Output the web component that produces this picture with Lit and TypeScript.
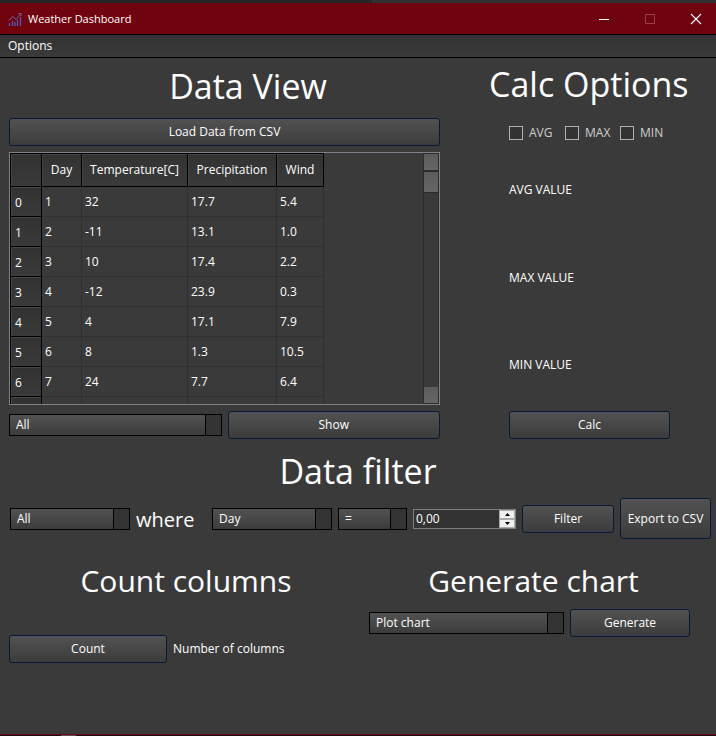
import { LitElement, html, css, svg } from "lit";
import { customElement, state } from "lit/decorators.js";

const HEADERS = ["Day", "Temperature[C]", "Precipitation", "Wind"];
const ROWS = [
  ["1", "32", "17.7", "5.4"],
  ["2", "-11", "13.1", "1.0"],
  ["3", "10", "17.4", "2.2"],
  ["4", "-12", "23.9", "0.3"],
  ["5", "4", "17.1", "7.9"],
  ["6", "8", "1.3", "10.5"],
  ["7", "24", "7.7", "6.4"],
];

@customElement("app-root")
export class AppRoot extends LitElement {
  @state() private amount = 0;

  static styles = css`
    :host {
      display: flex;
      flex-direction: column;
      min-height: 100vh;
      background: #3a3a3a;
      color: #fff;
      font: 12px/16px "Open Sans", "Noto Sans", sans-serif;
    }
    * { box-sizing: border-box; }
    button, select, input { font: inherit; color: inherit; margin: 0; }
    h1, h2, p { margin: 0; font-weight: 400; }
    .backdrop-top { height: 3px; background: linear-gradient(90deg, #262626 52%, #323232 52%); }
    .backdrop-bottom {
      height: 2px;
      border-top: 1px solid #6f050f;
      background: linear-gradient(90deg, #111 61px, #555 61px 76px, #111 76px);
    }
    .titlebar {
      display: flex;
      align-items: center;
      gap: 16px;
      height: 31px;
      padding: 0 5px 0 8px;
      background: #6f030e;
    }
    .brand { flex: 1; display: flex; align-items: center; gap: 6px; }
    .brand h1 { font-size: 11px; line-height: 16px; }
    .logo { display: block; width: 14px; height: 14px; }
    .win {
      display: grid;
      place-items: center;
      width: 30px;
      height: 30px;
      padding: 0;
      border: 0;
      background: none;
    }
    .win svg { display: block; width: 12px; height: 12px; }
    .menubar {
      display: flex;
      height: 24px;
      border: solid #000;
      border-width: 1px 0;
      background: linear-gradient(#323232, #3a3a3a);
    }
    .menubar button { padding: 0 8px; border: 0; background: none; }
    main { flex: 1; }

    .btn {
      min-width: 0;
      height: 28px;
      padding: 0 3px;
      border: 1px solid #051a39;
      border-radius: 3px;
      background: linear-gradient(#525252, #474747 50%, #3c3c3c);
      white-space: nowrap;
    }
    .combo {
      appearance: none;
      width: 100%;
      min-width: 0;
      height: 22px;
      padding: 0 20px 0 6px;
      border: 1px solid #000;
      border-radius: 0;
      outline: 0;
      background:
        linear-gradient(90deg, #000 1px, #343434 1px) right / 16px 100% no-repeat,
        linear-gradient(#525252, #474747 50%, #3c3c3c);
    }
    .heading {
      font-size: 34px;
      line-height: 48px;
      text-align: center;
      white-space: nowrap;
    }
    .heading.small { font-size: 30px; line-height: 44px; }

    .top {
      display: grid;
      grid-template-columns: minmax(0, 1fr) 199px;
      gap: 49px;
      padding: 4px 28px 0 9px;
    }
    .data { display: flex; flex-direction: column; }
    .data .heading { padding-left: 47px; }
    .load { margin: 8px 0 6px; }
    .frame {
      display: flex;
      justify-content: space-between;
      height: 253px;
      border: 1px solid #81818c;
      overflow: hidden;
    }
    table { border-collapse: separate; border-spacing: 0; table-layout: fixed; width: 314px; height: max-content; }
    th, td { height: 30px; padding: 0 3px; text-align: left; font-weight: 400; white-space: nowrap; }
    td { border: solid #303030; border-width: 0 1px 1px 0; }
    th {
      border: solid #000;
      border-width: 0 1px 1px 0;
      background: linear-gradient(#323232, #3a3a3a);
      box-shadow: inset 1px 1px #444;
    }
    thead th { height: 34px; border-top-width: 1px; text-align: center; }
    tbody th, .corner { border-left-width: 1px; }
    tbody th { padding: 2px 0 0 4px; }
    .w-index { width: 32px; }
    .w-day { width: 40px; }
    .w-temp { width: 106px; }
    .w-rain { width: 89px; }
    .w-wind { width: 47px; }
    .scroll {
      display: flex;
      flex-direction: column;
      justify-content: space-between;
      width: 16px;
      border: 1px solid #2c2c2c;
      background: #3a3a3a;
    }
    .scroll button, .thumb {
      display: block;
      width: 14px;
      height: 16px;
      padding: 0;
      border: 0;
      background: linear-gradient(#5c5c5c, #666);
    }
    .thumb { height: 23px; border: solid #2c2c2c; border-width: 2px 0 1px; }
    .pick { display: grid; grid-template-columns: 1fr 1fr; gap: 6px; align-items: center; margin-top: 6px; }

    .calc { display: flex; flex-direction: column; }
    .calc .heading { line-height: 44px; }
    .calc-body { flex: 1; display: flex; flex-direction: column; padding: 0 18px 0 20px; }
    .checks { display: grid; grid-template-columns: 56px 55px auto; margin-top: 19px; color: #cfcfcf; }
    .checks label { display: flex; align-items: center; gap: 6px; }
    .checks input {
      appearance: none;
      flex: none;
      width: 14px;
      height: 14px;
      border: 1px solid #b0b0b0;
      background: #333;
    }
    .checks input:checked { background: #b0b0b0; }
    .values { flex: 1; display: grid; grid-template-rows: 88px 87px 1fr; margin-top: 41px; }

    .filter {
      display: grid;
      grid-template-columns: 120fr 70fr 120fr 69fr 103fr 92fr 91fr;
      gap: 6px;
      align-items: center;
      margin: 3px 5px 0 10px;
    }
    .filter-title { margin-top: 8px; }
    .where { min-width: 0; padding-top: 2px; font-size: 20px; line-height: 28px; }
    .export { height: 41px; }
    .spin { display: flex; min-width: 0; height: 20px; border: 1px solid #7f7f7f; }
    .spin input {
      flex: 1;
      width: 0;
      min-width: 0;
      padding: 0 2px;
      border: 0;
      outline: 0;
      background: #333;
    }
    .steps { display: grid; grid-template-rows: 9px 9px; width: 16px; background: #fff; }
    .steps button {
      display: grid;
      place-items: center;
      padding: 0;
      border: 1px solid #aaa;
      background: #f0f0f0;
    }
    .steps svg { display: block; width: 5px; height: 3px; }

    .bottom {
      display: grid;
      grid-template-columns: 354fr 329fr;
      gap: 6px;
      margin: 20px 18px 0 9px;
    }
    .count { display: flex; align-items: center; gap: 6px; margin-top: 32px; }
    .count .btn { width: 158px; }
    .chart { display: grid; grid-template-columns: 195fr 120fr; gap: 6px; align-items: center; margin: 6px 8px 0 0; }
  `;

  private step(by: number) {
    this.amount += by;
  }

  render() {
    return html`
      <div class="backdrop-top"></div>
      <header class="titlebar">
        <div class="brand">
          <svg class="logo" viewBox="0 0 14 14" fill="none" aria-hidden="true">
            ${svg`
              <path d="M1.500 14v-3M4.500 14v-5M7 14v-4M9.500 14v-6M12.500 14V5" stroke="#4a62c8" stroke-width="1.200"/>
              <path d="M.5 8.500l4.500-4 3 3 4.500-5" stroke="#6568b8"/>
              <path d="M10.500 1.500h2.500v2.500" stroke="#7d62a8"/>`}
          </svg>
          <h1>Weather Dashboard</h1>
        </div>
        <button class="win" aria-label="Minimize">
          <svg viewBox="0 0 12 12"><path d="M1 6.500h10" stroke="#fff"/></svg>
        </button>
        <button class="win" aria-label="Maximize" disabled>
          <svg viewBox="0 0 12 12"><path d="M1.500 1.500h9v9h-9z" stroke="#9a4049" fill="none"/></svg>
        </button>
        <button class="win" aria-label="Close">
          <svg viewBox="0 0 12 12"><path d="M1 1l10 10M11 1L1 11" stroke="#fff" stroke-width="1.200"/></svg>
        </button>
      </header>
      <nav class="menubar"><button>Options</button></nav>

      <main>
        <div class="top">
          <section class="data">
            <h2 class="heading">Data View</h2>
            <button class="btn load">Load Data from CSV</button>
            <div class="frame">
              <table>
                <colgroup>
                  <col class="w-index" /><col class="w-day" /><col class="w-temp" /><col class="w-rain" /><col class="w-wind" />
                </colgroup>
                <thead>
                  <tr><th class="corner"></th>${HEADERS.map((h) => html`<th scope="col">${h}</th>`)}</tr>
                </thead>
                <tbody>
                  ${ROWS.map(
                    (r, i) => html`<tr><th scope="row">${i}</th>${r.map((c) => html`<td>${c}</td>`)}</tr>`
                  )}
                  <tr><th></th><td></td><td></td><td></td><td></td></tr>
                </tbody>
              </table>
              <div class="scroll">
                <div>
                  <button aria-label="Scroll up"></button>
                  <div class="thumb"></div>
                </div>
                <button aria-label="Scroll down"></button>
              </div>
            </div>
            <div class="pick">
              <select class="combo" aria-label="Columns to show"><option>All</option></select>
              <button class="btn">Show</button>
            </div>
          </section>

          <section class="calc">
            <h2 class="heading">Calc Options</h2>
            <div class="calc-body">
              <div class="checks">
                ${["AVG", "MAX", "MIN"].map((n) => html`<label><input type="checkbox" />${n}</label>`)}
              </div>
              <div class="values"><p>AVG VALUE</p><p>MAX VALUE</p><p>MIN VALUE</p></div>
              <button class="btn">Calc</button>
            </div>
          </section>
        </div>

        <section>
          <h2 class="heading filter-title">Data filter</h2>
          <div class="filter">
            <select class="combo" aria-label="Columns to filter"><option>All</option></select>
            <span class="where">where</span>
            <select class="combo" aria-label="Filter column"><option>Day</option></select>
            <select class="combo" aria-label="Operator"><option>=</option></select>
            <div class="spin">
              <input type="text" inputmode="decimal" aria-label="Filter value"
                .value=${this.amount.toFixed(2).replace(".", ",")} />
              <div class="steps">
                <button aria-label="Increase" @click=${() => this.step(1)}>
                  <svg viewBox="0 0 5 3"><path d="M0 3L2.500 0L5 3z" fill="#000"/></svg>
                </button>
                <button aria-label="Decrease" @click=${() => this.step(-1)}>
                  <svg viewBox="0 0 5 3"><path d="M0 0L2.500 3L5 0z" fill="#000"/></svg>
                </button>
              </div>
            </div>
            <button class="btn">Filter</button>
            <button class="btn export">Export to CSV</button>
          </div>
        </section>

        <div class="bottom">
          <section>
            <h2 class="heading small">Count columns</h2>
            <div class="count"><button class="btn">Count</button><span>Number of columns</span></div>
          </section>
          <section>
            <h2 class="heading small">Generate chart</h2>
            <div class="chart">
              <select class="combo" aria-label="Chart type"><option>Plot chart</option></select>
              <button class="btn">Generate</button>
            </div>
          </section>
        </div>
      </main>
      <div class="backdrop-bottom"></div>
    `;
  }
}
